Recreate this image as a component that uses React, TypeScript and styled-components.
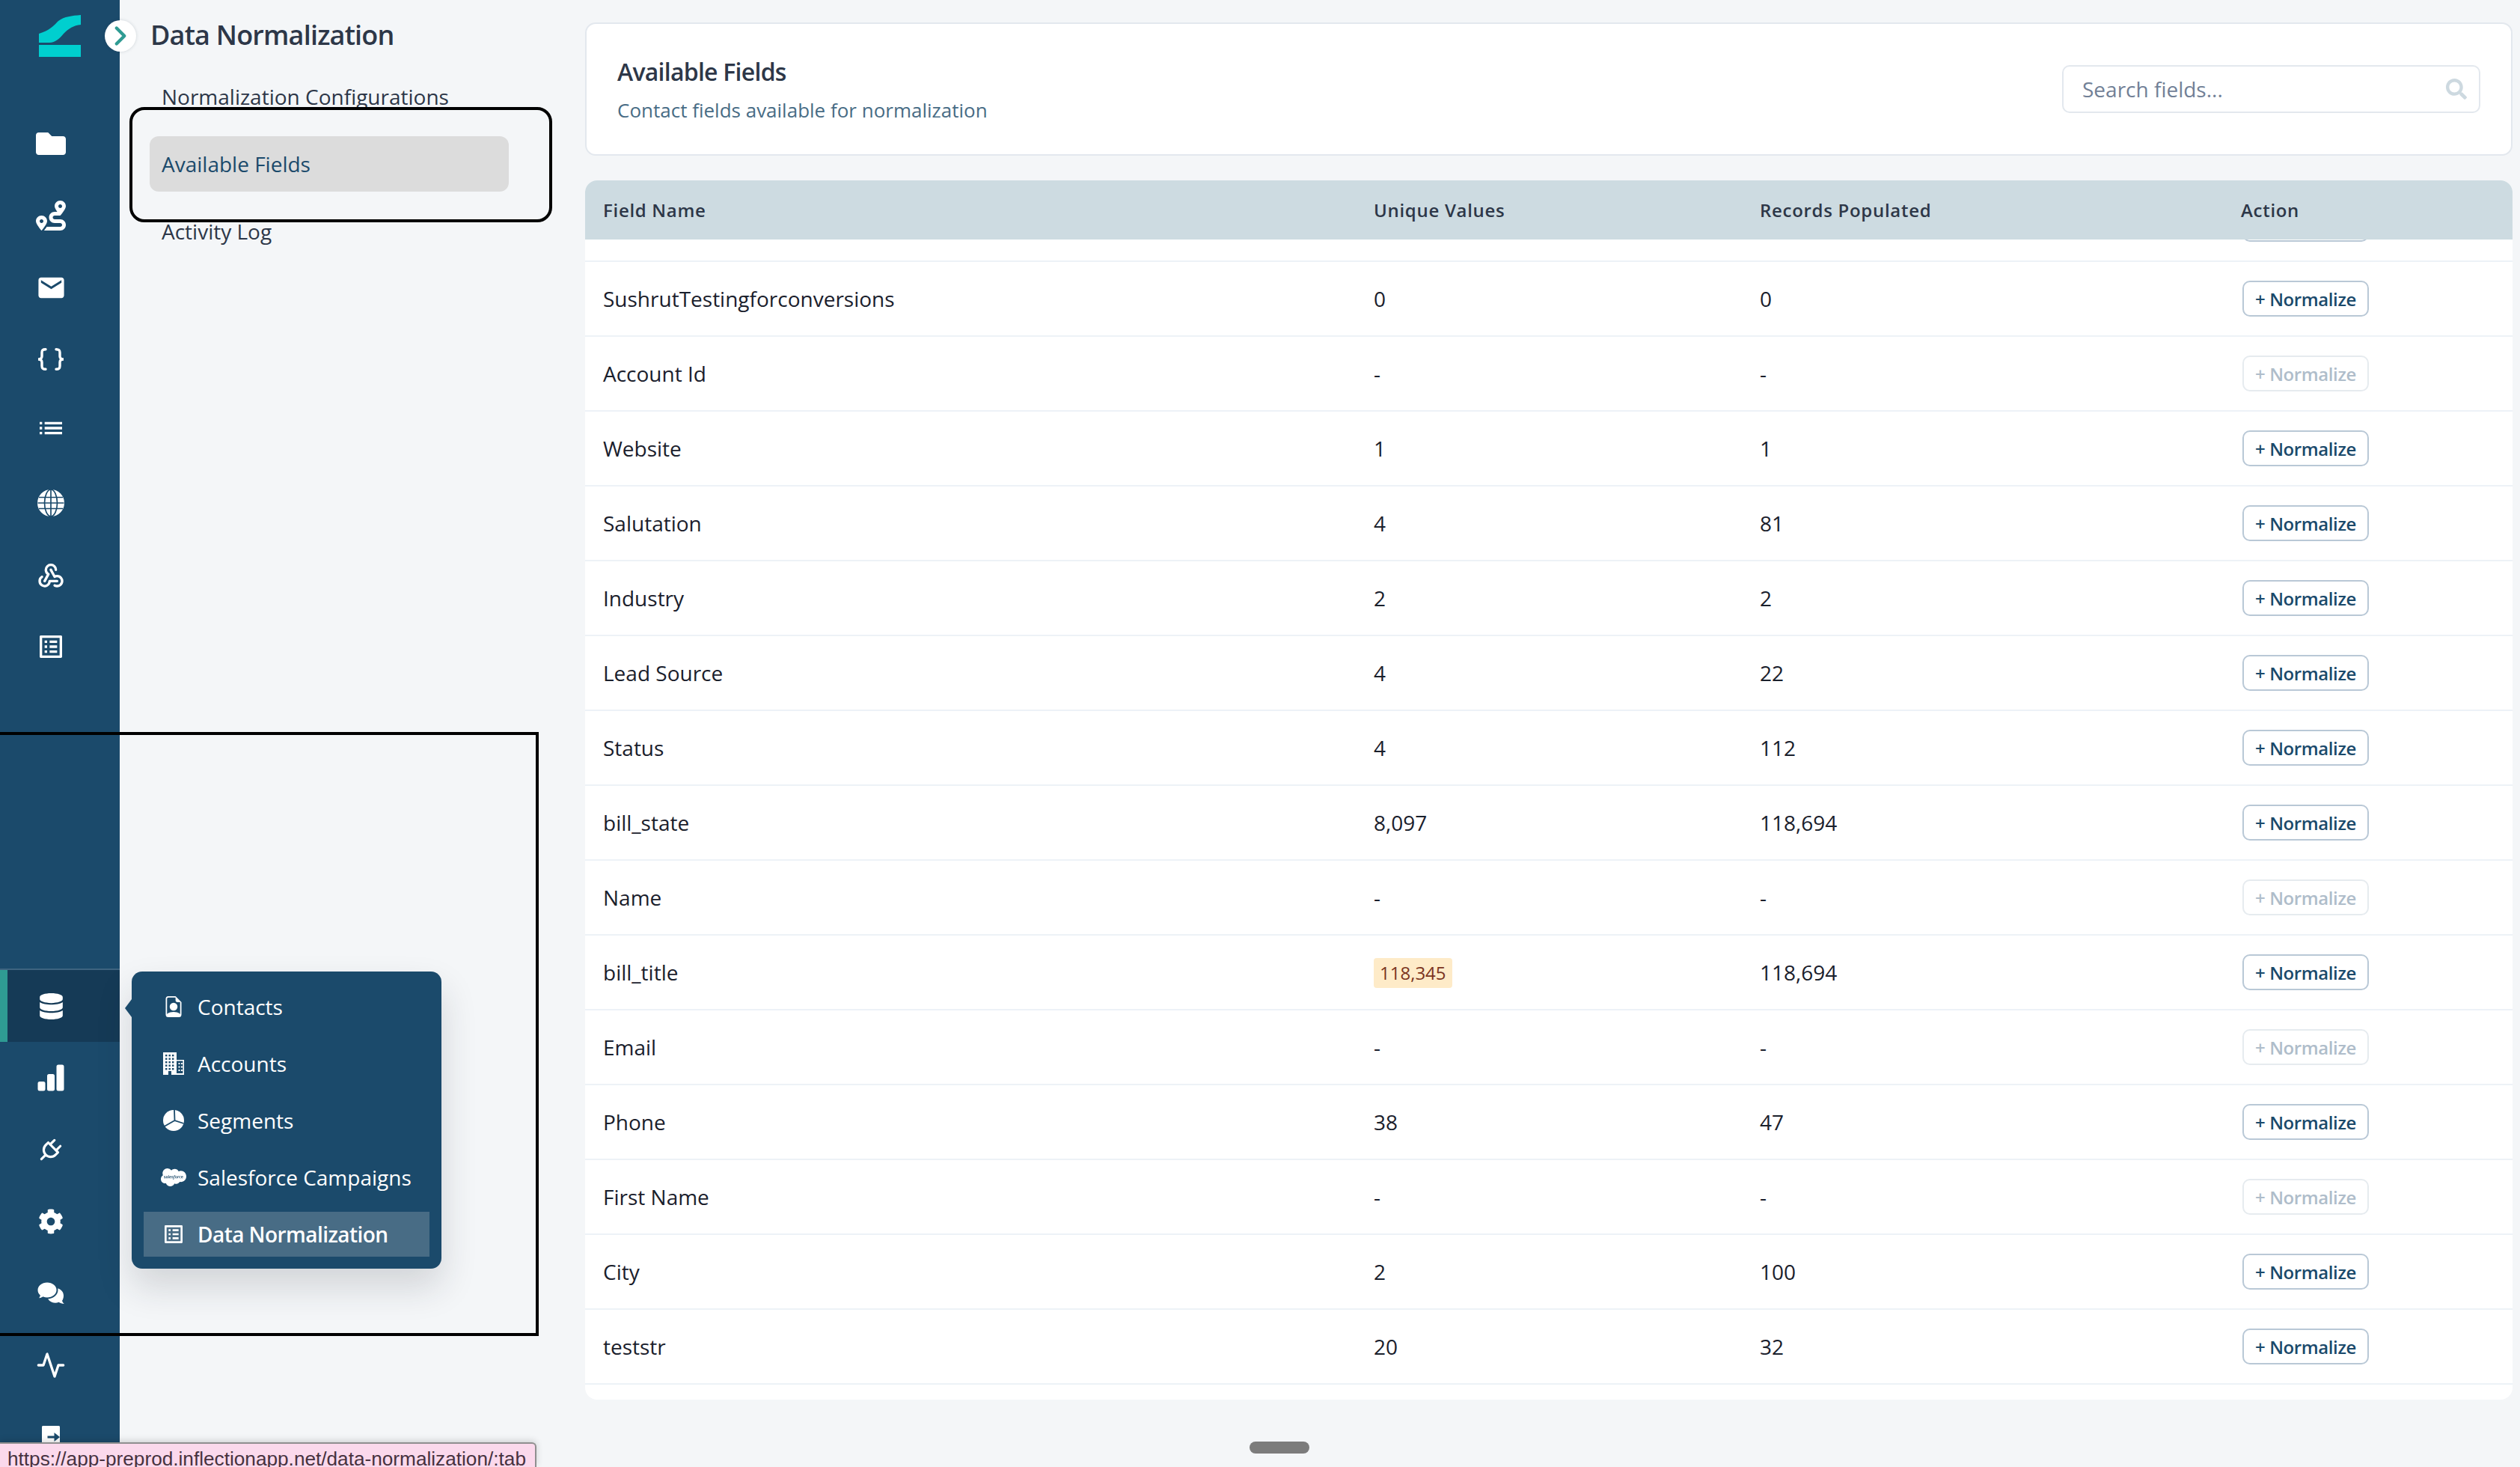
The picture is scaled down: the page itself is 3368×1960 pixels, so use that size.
import React from 'react';
import styled, { createGlobalStyle } from 'styled-components';
import {
  FaFolder,
  FaRoute,
  FaDatabase,
  FaCog,
  FaSearch,
  FaSalesforce,
} from 'react-icons/fa';
import { MdEmail, MdList, MdOutlineListAlt } from 'react-icons/md';
import { TbWebhook, TbPlug } from 'react-icons/tb';
import { BsBarChartFill, BsFileEarmarkPerson } from 'react-icons/bs';
import { FiActivity, FiChevronRight } from 'react-icons/fi';
import { RiLogoutBoxRFill } from 'react-icons/ri';

const navy = '#1b4a6b';

const GlobalStyle = createGlobalStyle`
  * { box-sizing: border-box; }
  html, body { margin: 0; padding: 0; background: #f4f6f8; }
  body { font-family: "Open Sans", "Liberation Sans", sans-serif; }
`;

const Page = styled.div`
  position: relative;
  display: flex;
  width: 3368px;
  height: 1960px;
  overflow: hidden;
  background: #f4f6f8;
`;

const Sidebar = styled.nav`
  width: 160px;
  flex: none;
  background: ${navy};
  color: #fff;
`;

const LogoRow = styled.div`
  height: 144px;
  padding: 20px 0 0 52px;
`;

const NavItem = styled.div<{ $active?: boolean; $first?: boolean }>`
  position: relative;
  height: 96px;
  display: flex;
  align-items: center;
  justify-content: center;
  padding-right: 24px;
  margin-top: ${(p) => (p.$first ? '384px' : '0')};
  background: ${(p) => (p.$active ? '#153a56' : 'transparent')};
  box-shadow: ${(p) => (p.$active ? 'inset 10px 0 0 #2f9b93, 0 -2px 0 #3e6480' : 'none')};
`;

const ListIcon = styled(MdList)`
  margin-top: -8px;
`;

const Toggle = styled.div`
  position: absolute;
  left: 140px;
  top: 27px;
  width: 42px;
  height: 42px;
  display: flex;
  align-items: center;
  justify-content: center;
  border-radius: 50%;
  background: #fff;
  box-shadow: 0 0 4px rgba(40, 60, 80, 0.18);
  color: #2f9b93;
`;

const SubNav = styled.aside`
  width: 622px;
  flex: none;
  padding: 24px 0 0 40px;
`;

const PageTitle = styled.h1`
  margin: 0 0 22px 1px;
  font-size: 36px;
  line-height: 46px;
  font-weight: 600;
  letter-spacing: -0.8px;
  color: #2d3748;
`;

const SubNavList = styled.div`
  display: flex;
  flex-direction: column;
  gap: 16px;
  width: 480px;
`;

const SubNavItem = styled.div<{ $active?: boolean }>`
  height: 74px;
  display: flex;
  align-items: center;
  padding-left: 16px;
  border-radius: 12px;
  font-size: 28px;
  color: ${(p) => (p.$active ? navy : '#2d3748')};
  background: ${(p) => (p.$active ? '#dcdcdc' : 'transparent')};
`;

const Main = styled.main`
  flex: 1;
  min-width: 0;
  display: flex;
  flex-direction: column;
  gap: 33px;
  padding: 30px 10px 90px 0;
`;

const HeaderCard = styled.section`
  height: 178px;
  flex: none;
  display: flex;
  align-items: center;
  justify-content: space-between;
  padding: 0 41px;
  background: #fff;
  border: 2px solid #e3e8ee;
  border-radius: 14px;
`;

const CardTitle = styled.h2`
  margin: 0 0 11px;
  font-size: 32px;
  line-height: 44px;
  font-weight: 600;
  letter-spacing: -0.75px;
  color: #2d3748;
`;

const CardSubtitle = styled.p`
  margin: 0;
  font-size: 26px;
  line-height: 36px;
  color: #486c85;
`;

const SearchBox = styled.div`
  width: 559px;
  height: 64px;
  display: flex;
  align-items: center;
  justify-content: space-between;
  padding: 0 16px 0 25px;
  background: #fff;
  border: 2px solid #e3e8ee;
  border-radius: 10px;
  font-size: 28px;
  color: #718096;
`;

const TableCard = styled.section`
  flex: 1;
  min-height: 0;
  display: flex;
  flex-direction: column;
  background: #fff;
  border-radius: 16px;
  overflow: hidden;
`;

const GridRow = styled.div`
  display: grid;
  grid-template-columns: 1030px 516px 643px 1fr;
  align-items: center;
  padding-left: 24px;
`;

const HeadRow = styled(GridRow)`
  height: 79px;
  flex: none;
  background: #cddbe1;
  font-size: 24px;
  font-weight: 600;
  letter-spacing: 0.7px;
  color: #2d3748;
`;

const TableBody = styled.div`
  flex: 1;
  min-height: 0;
  overflow: hidden;
`;

const Rows = styled.div`
  margin-top: -70px;
`;

const Row = styled(GridRow)`
  height: 100px;
  border-bottom: 2px solid #edf2f7;
  font-size: 28px;
  color: #1a202c;
`;

const Badge = styled.span`
  display: inline-block;
  height: 40px;
  padding: 0 8px;
  border-radius: 4px;
  background: #feebc8;
  color: #7b341e;
  font-size: 24px;
  line-height: 40px;
`;

const NormalizeButton = styled.button<{ $disabled?: boolean }>`
  width: 169px;
  height: 48px;
  margin-left: 2px;
  padding: 0;
  background: #fff;
  border: 2px solid ${(p) => (p.$disabled ? '#e6ebef' : '#b9c8d6')};
  border-radius: 10px;
  font-family: inherit;
  font-size: 24px;
  font-weight: 600;
  letter-spacing: -0.4px;
  color: ${(p) => (p.$disabled ? '#afbdca' : navy)};
`;

const Flyout = styled.div`
  position: absolute;
  left: 176px;
  top: 1298px;
  width: 414px;
  padding: 17px 16px 16px;
  display: flex;
  flex-direction: column;
  gap: 16px;
  background: ${navy};
  border-radius: 14px;
  box-shadow: 0 24px 48px rgba(30, 40, 50, 0.16);
  color: #fff;

  &::before {
    content: '';
    position: absolute;
    left: -9px;
    top: 37px;
    border-top: 12px solid transparent;
    border-bottom: 12px solid transparent;
    border-right: 9px solid ${navy};
  }
`;

const FlyoutItem = styled.div<{ $active?: boolean }>`
  height: 60px;
  display: flex;
  align-items: center;
  font-size: 28px;
  font-weight: ${(p) => (p.$active ? 600 : 400)};
  letter-spacing: ${(p) => (p.$active ? '-0.55px' : '0')};
  background: ${(p) => (p.$active ? '#486c85' : 'transparent')};
`;

const FlyoutIcon = styled.span`
  width: 72px;
  padding-left: 8px;
  flex: none;
  display: flex;
  align-items: center;
  justify-content: center;
`;

const Annotation = styled.div`
  position: absolute;
  border: 4px solid #000;
  pointer-events: none;
`;

const FieldsAnnotation = styled(Annotation)`
  left: 173px;
  top: 143px;
  width: 565px;
  height: 154px;
  border-radius: 20px;
`;

const MenuAnnotation = styled(Annotation)`
  left: -10px;
  top: 978px;
  width: 730px;
  height: 807px;
`;

const ScrollThumb = styled.div`
  position: absolute;
  left: 1670px;
  top: 1926px;
  width: 80px;
  height: 16px;
  border-radius: 8px;
  background: #7c7c7c;
`;

const StatusTip = styled.div`
  position: absolute;
  left: 0;
  bottom: 0;
  width: 717px;
  height: 33px;
  padding-left: 10px;
  overflow: hidden;
  background: #fbd9ec;
  border-top: 2px solid #8f8f8f;
  border-right: 2px solid #8f8f8f;
  border-top-right-radius: 6px;
  box-shadow: 0 -2px 10px rgba(0, 0, 0, 0.16);
  font-family: "Liberation Sans", Arial, sans-serif;
  font-size: 26.2px;
  line-height: 40px;
  white-space: nowrap;
  color: #47323f;
`;

const Logo = () => (
  <svg width="56" height="56" viewBox="0 0 56 56" fill="#00cfcf">
    <path d="M0 25C14 21 20 14 26 8C34 2 44 1 56 0L56 13C46 14 40 18 33 25C28 31 22 37 14 37L0 37Z" />
    <rect x="0" y="40" width="56" height="16" />
  </svg>
);

const Braces = () => (
  <svg width="38" height="30" viewBox="0 0 38 30" fill="none" stroke="#fff" strokeWidth="3.4" strokeLinecap="round">
    <path d="M12 1.7C8 1.7 7 3 7 6V11C7 13.5 5.5 15 2 15C5.5 15 7 16.5 7 19V24C7 27 8 28.3 12 28.3" />
    <path d="M26 1.7C30 1.7 31 3 31 6V11C31 13.5 32.5 15 36 15C32.5 15 31 16.5 31 19V24C31 27 30 28.3 26 28.3" />
  </svg>
);

const Globe = () => (
  <svg width="36" height="36" viewBox="0 0 36 36">
    <circle cx="18" cy="18" r="18" fill="#fff" />
    <g fill="none" stroke={navy} strokeWidth="1.7">
      <ellipse cx="18" cy="18" rx="8.5" ry="18" />
      <path d="M18 0V36M2 10.5H34M0.5 18H35.5M2 25.5H34" />
    </g>
  </svg>
);

const Chats = () => (
  <svg width="36" height="30" viewBox="0 0 36 30">
    <path fill="#fff" d="M24 8C30.500 8 35 12.500 35 18C35 21 34 23.500 33 25C33.500 26.500 34.500 28 36 29C33 29 30 28 28.500 26.800C27 27.400 25.500 27.700 24 27.700C18 27.700 13 23.500 13 18C13 12.500 18 8 24 8Z" />
    <path fill="#fff" stroke={navy} strokeWidth="2" d="M13 -0.500C20.500 -0.500 26.500 4.500 26.500 10.500C26.500 16.500 20.500 21.500 13 21.500C11 21.500 9 21.100 7.500 20.500C5.500 22 3 22.500 -0.500 22.500C1 21.500 2.300 19.800 2.800 18C0.500 16 -0.500 13.500 -0.500 10.500C-0.500 4.500 5.500 -0.500 13 -0.500Z" />
  </svg>
);

const Buildings = () => (
  <svg width="28" height="30" viewBox="0 0 28 30">
    <path fill="#fff" d="M0 0H18V30H11V25H7V30H0Z" />
    <path fill="none" stroke="#fff" strokeWidth="1.6" d="M18 10.800H27.200V29.200H18" />
    <path fill="#fff" d="M18 28H28V30H18Z" />
    <g fill={navy}>
      {[3, 7.5, 12, 16.5, 21].map((y) =>
        [3, 7.5, 12].map((x) => <rect key={`${x}-${y}`} x={x} y={y} width="2.4" height="2.4" />)
      )}
    </g>
    <g fill="#fff">
      {[14, 18.5, 23].map((y) =>
        [20.5, 24].map((x) => <rect key={`${x}-${y}`} x={x} y={y} width="2" height="2" />)
      )}
    </g>
  </svg>
);

const Pie = () => (
  <svg width="28" height="28" viewBox="0 0 28 28">
    <circle cx="14" cy="14" r="14" fill="#fff" />
    <path fill="none" stroke={navy} strokeWidth="1.8" d="M15 0L15.500 14L27.500 18M15.500 14L1.500 22" />
  </svg>
);

const fields = [
  { name: '', unique: '', records: '', enabled: true },
  { name: 'SushrutTestingforconversions', unique: '0', records: '0', enabled: true },
  { name: 'Account Id', unique: '-', records: '-', enabled: false },
  { name: 'Website', unique: '1', records: '1', enabled: true },
  { name: 'Salutation', unique: '4', records: '81', enabled: true },
  { name: 'Industry', unique: '2', records: '2', enabled: true },
  { name: 'Lead Source', unique: '4', records: '22', enabled: true },
  { name: 'Status', unique: '4', records: '112', enabled: true },
  { name: 'bill_state', unique: '8,097', records: '118,694', enabled: true },
  { name: 'Name', unique: '-', records: '-', enabled: false },
  { name: 'bill_title', unique: '118,345', records: '118,694', enabled: true, warn: true },
  { name: 'Email', unique: '-', records: '-', enabled: false },
  { name: 'Phone', unique: '38', records: '47', enabled: true },
  { name: 'First Name', unique: '-', records: '-', enabled: false },
  { name: 'City', unique: '2', records: '100', enabled: true },
  { name: 'teststr', unique: '20', records: '32', enabled: true },
];

const App: React.FC = () => {
  return (
    <Page>
      <GlobalStyle />
      <Sidebar>
        <LogoRow>
          <Logo />
        </LogoRow>
        <NavItem><FaFolder size={40} /></NavItem>
        <NavItem><FaRoute size={40} /></NavItem>
        <NavItem><MdEmail size={41} /></NavItem>
        <NavItem><Braces /></NavItem>
        <NavItem><ListIcon size={40} /></NavItem>
        <NavItem><Globe /></NavItem>
        <NavItem><TbWebhook size={40} /></NavItem>
        <NavItem><MdOutlineListAlt size={40} /></NavItem>
        <NavItem $first $active><FaDatabase size={35} /></NavItem>
        <NavItem><BsBarChartFill size={40} /></NavItem>
        <NavItem><TbPlug size={38} /></NavItem>
        <NavItem><FaCog size={34} /></NavItem>
        <NavItem><Chats /></NavItem>
        <NavItem><FiActivity size={40} /></NavItem>
        <NavItem><RiLogoutBoxRFill size={36} /></NavItem>
      </Sidebar>

      <Toggle><FiChevronRight size={46} strokeWidth={2.5} /></Toggle>

      <SubNav>
        <PageTitle>Data Normalization</PageTitle>
        <SubNavList>
          <SubNavItem>Normalization Configurations</SubNavItem>
          <SubNavItem $active>Available Fields</SubNavItem>
          <SubNavItem>Activity Log</SubNavItem>
        </SubNavList>
      </SubNav>

      <Main>
        <HeaderCard>
          <div>
            <CardTitle>Available Fields</CardTitle>
            <CardSubtitle>Contact fields available for normalization</CardSubtitle>
          </div>
          <SearchBox>
            Search fields...
            <FaSearch size={28} color="#cdd9e0" />
          </SearchBox>
        </HeaderCard>

        <TableCard>
          <HeadRow>
            <span>Field Name</span>
            <span>Unique Values</span>
            <span>Records Populated</span>
            <span>Action</span>
          </HeadRow>
          <TableBody>
            <Rows>
              {fields.map((field, index) => (
                <Row key={index}>
                  <span>{field.name}</span>
                  <span>{field.warn ? <Badge>{field.unique}</Badge> : field.unique}</span>
                  <span>{field.records}</span>
                  <span>
                    <NormalizeButton $disabled={!field.enabled}>+ Normalize</NormalizeButton>
                  </span>
                </Row>
              ))}
            </Rows>
          </TableBody>
        </TableCard>
      </Main>

      <Flyout>
        <FlyoutItem><FlyoutIcon><BsFileEarmarkPerson size={28} /></FlyoutIcon>Contacts</FlyoutItem>
        <FlyoutItem><FlyoutIcon><Buildings /></FlyoutIcon>Accounts</FlyoutItem>
        <FlyoutItem><FlyoutIcon><Pie /></FlyoutIcon>Segments</FlyoutItem>
        <FlyoutItem><FlyoutIcon><FaSalesforce size={34} /></FlyoutIcon>Salesforce Campaigns</FlyoutItem>
        <FlyoutItem $active><FlyoutIcon><MdOutlineListAlt size={32} /></FlyoutIcon>Data Normalization</FlyoutItem>
      </Flyout>

      <FieldsAnnotation />
      <MenuAnnotation />
      <ScrollThumb />
      <StatusTip>https://app-preprod.inflectionapp.net/data-normalization/:tab</StatusTip>
    </Page>
  );
};

export default App;
